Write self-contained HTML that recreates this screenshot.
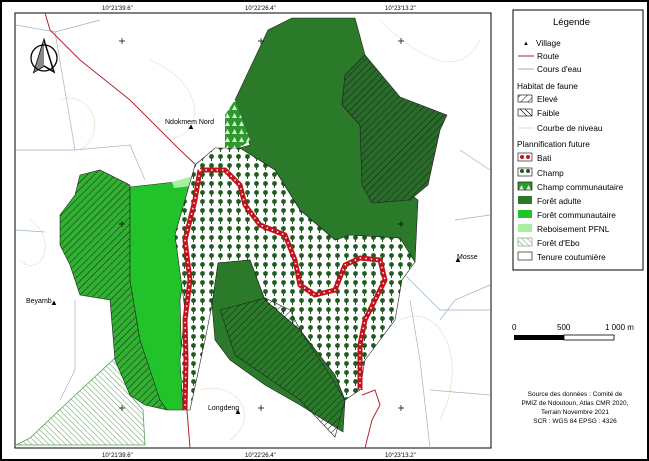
<!DOCTYPE html>
<html><head><meta charset="utf-8"><style>
body{margin:0;width:649px;height:461px;background:#fff;overflow:hidden;font-family:"Liberation Sans",sans-serif}
svg{position:absolute;left:0;top:0}
</style></head><body>
<svg width="649" height="461" viewBox="0 0 649 461">
<defs>
<pattern id="hd" width="5" height="5" patternUnits="userSpaceOnUse" patternTransform="rotate(45)"><line x1="0" y1="0" x2="0" y2="5" stroke="#0a2a0a" stroke-width="1"/></pattern>
<pattern id="he" width="4" height="4" patternUnits="userSpaceOnUse" patternTransform="rotate(-45)"><line x1="0" y1="0" x2="0" y2="4" stroke="#5aa05a" stroke-width="1"/></pattern>
<pattern id="tr" width="9" height="9" patternUnits="userSpaceOnUse"><rect width="9" height="9" fill="#fff"/><circle cx="4.5" cy="3.5" r="2.4" fill="#1f5a1f"/><rect x="4" y="5" width="1" height="3" fill="#1f5a1f"/></pattern>
<pattern id="tc" width="7" height="8" patternUnits="userSpaceOnUse"><rect width="7" height="8" fill="#2e9a2e"/><path d="M3.5 1 L6 6 L1 6Z" fill="#d8f0d8"/></pattern>
</defs>
<rect x="1" y="1" width="647" height="459" fill="#fff" stroke="#000" stroke-width="2"/>
<rect x="15" y="13" width="476" height="435" fill="#fff" stroke="#000" stroke-width="1"/>
<g fill="none" stroke="#e8dcc0" stroke-width="0.6">
<path d="M150 60 C200 80 210 130 170 140"/><path d="M380 20 C420 60 460 80 480 40"/><path d="M400 320 C440 300 470 360 440 420"/><path d="M30 220 C60 240 40 280 20 260"/><path d="M200 390 C240 380 260 420 230 440"/><path d="M60 100 C90 90 110 130 80 150"/>
</g>
<g fill="none" stroke="#9ab4c8" stroke-width="0.7">
<path d="M16 25 L55 32 L100 20"/><path d="M55 32 L70 120 L75 150"/><path d="M16 150 L75 150 L130 145 L145 180"/><path d="M460 150 L490 170"/><path d="M400 270 L440 310 L490 310"/><path d="M410 300 L420 360 L430 448"/><path d="M440 320 L455 300 L490 285"/><path d="M430 390 L490 395"/><path d="M16 230 L45 232"/><path d="M75 300 L75 370 L60 400"/><path d="M490 215 L455 220"/>
</g>
<polygon points="16,445 30,438 70,400 115,358 130,395 143,410 145,445" fill="url(#he)" stroke="#5aa05a" stroke-width="0.8"/>
<polygon points="80,175 100,170 130,185 130,280 140,340 167,410 145,405 130,395 115,360 110,300 80,295 70,265 60,245 60,215 75,195" fill="#32b034"/>
<polygon points="80,175 100,170 130,185 130,280 140,340 167,410 145,405 130,395 115,360 110,300 80,295 70,265 60,245 60,215 75,195" fill="url(#hd)" stroke="#222" stroke-width="0.6"/>
<polygon points="130,187 175,182 193,178 192,230 180,300 183,410 167,410 160,400 140,340 130,280" fill="#22c22a" stroke="#222" stroke-width="0.6"/>
<polygon points="172,182 193,176 192,186 174,188" fill="#a6f0a0"/>
<polygon points="195,165 215,148 240,148 275,170 300,210 335,240 350,235 400,238 415,262 402,280 395,320 380,340 365,360 360,390 345,400 335,375 300,330 265,300 250,260 218,263 212,305 205,340 190,410 183,410 180,360 185,310 175,235" fill="url(#tr)" stroke="#222" stroke-width="0.6"/>
<polygon points="235,100 268,30 292,18 355,18 365,55 345,75 342,105 360,125 372,200 405,190 418,200 415,262 400,238 350,235 335,240 300,210 275,170 240,148 250,145" fill="#2a7a2a" stroke="#222" stroke-width="0.6"/>
<polygon points="345,75 365,55 400,97 447,115 440,130 428,185 410,200 372,203 362,185 360,125 342,105" fill="#2a6a2a"/>
<polygon points="345,75 365,55 400,97 447,115 440,130 428,185 410,200 372,203 362,185 360,125 342,105" fill="url(#hd)" stroke="#222" stroke-width="0.6"/>
<polygon points="225,115 235,100 250,140 240,148 225,148" fill="url(#tc)"/>
<polygon points="218,263 250,260 265,300 300,330 335,375 345,400 343,432 300,405 265,385 230,360 215,340 212,305" fill="#2a7a2a" stroke="#222" stroke-width="0.6"/>
<polygon points="220,310 265,298 290,310 300,330 330,375 345,400 335,437 300,400 235,355" fill="url(#hd)" stroke="#222" stroke-width="0.6"/>
<g fill="none" stroke-linejoin="round">
<path d="M200 170 L225 170 L240 185 L245 205 L260 225 L285 235 L295 260 L300 285 L315 295 L335 290 L345 265 L360 258 L380 260 L385 280 L375 300 L365 320 L360 345 L360 390 M200 170 L195 200 L185 240 L190 280 L185 320 L186 360 L185 410" stroke="#c0141c" stroke-width="5"/>
<path d="M200 170 L225 170 L240 185 L245 205 L260 225 L285 235 L295 260 L300 285 L315 295 L335 290 L345 265 L360 258 L380 260 L385 280 L375 300 L365 320 L360 345 L360 390 M200 170 L195 200 L185 240 L190 280 L185 320 L186 360 L185 410" stroke="#fff" stroke-width="1.5" stroke-dasharray="1.5 4"/>
</g>
<g fill="none" stroke="#b8232c" stroke-width="1">
<path d="M45 13 L50 30 L80 60 L130 100 L180 150 L196 165"/><path d="M187 410 L190 448"/><path d="M362 395 L375 390 L380 405 L372 420 L365 448"/>
</g>
<g font-size="7" fill="#000">
<text x="165" y="124">Ndokmem Nord</text><text x="26" y="303">Beyamb</text><text x="457" y="259">Mosse</text><text x="208" y="410">Longdeng</text>
<text x="102" y="10" font-size="6">10°21'39.6"</text><text x="245" y="10" font-size="6">10°22'26.4"</text><text x="385" y="10" font-size="6">10°23'13.2"</text>
<text x="102" y="457" font-size="6">10°21'39.6"</text><text x="245" y="457" font-size="6">10°22'26.4"</text><text x="385" y="457" font-size="6">10°23'13.2"</text>
</g>
<g fill="#000" font-size="8"><text x="187" y="129">▲</text><text x="50" y="305">▲</text><text x="454" y="262">▲</text><text x="234" y="414">▲</text></g>
<g stroke="#000" stroke-width="0.7"><path d="M119 41h6M122 38v6M258 41h6M261 38v6M398 41h6M401 38v6M119 224h6M122 221v6M398 224h6M401 221v6M119 408h6M122 405v6M258 408h6M261 405v6M398 408h6M401 405v6"/></g>
<g transform="translate(34,40)"><path d="M0 32 L10 0 L20 32 L10 26Z" fill="#fff" stroke="#000" stroke-width="1.5"/><path d="M0 32 L10 0 L10 26Z" fill="#888"/><circle cx="10" cy="18" r="13" fill="none" stroke="#000" stroke-width="1.3"/></g>
<rect x="513" y="10" width="130" height="260" fill="#fff" stroke="#000" stroke-width="1"/>
<g font-size="8.3" fill="#000">
<text x="553" y="25" font-size="9.5">Légende</text>
<text x="523" y="45" font-size="6">▲</text><text x="536" y="46">Village</text>
<line x1="518" y1="56" x2="534" y2="56" stroke="#b8232c"/><text x="537" y="59">Route</text>
<line x1="518" y1="69" x2="534" y2="69" stroke="#9ab4c8"/><text x="537" y="72">Cours d'eau</text>
<text x="517" y="89">Habitat de faune</text>
<rect x="518" y="95" width="14" height="7" fill="url(#hd)" stroke="#000" stroke-width=".6"/><text x="537" y="102">Elevé</text>
<rect x="518" y="109" width="14" height="7" fill="#fff" stroke="#000" stroke-width=".6"/><path d="M520 109l7 7M525 109l7 7" stroke="#000" stroke-width=".6"/><text x="537" y="116">Faible</text>
<line x1="518" y1="128" x2="534" y2="128" stroke="#e8dcc0"/><text x="537" y="131">Courbe de niveau</text>
<text x="517" y="147">Plannification future</text>
<rect x="518" y="153" width="14" height="8" fill="#fff" stroke="#000" stroke-width=".6"/><circle cx="522" cy="157" r="2" fill="#c0141c"/><circle cx="528" cy="157" r="2" fill="#c0141c"/><text x="537" y="161">Bati</text>
<rect x="518" y="168" width="14" height="8" fill="#fff" stroke="#000" stroke-width=".6"/><circle cx="522" cy="171" r="2" fill="#1f5a1f"/><circle cx="528" cy="171" r="2" fill="#1f5a1f"/><text x="537" y="176">Champ</text>
<rect x="518" y="182" width="14" height="8" fill="url(#tc)" stroke="#000" stroke-width=".6"/><text x="537" y="190">Champ communautaire</text>
<rect x="518" y="196" width="14" height="8" fill="#2a7a2a"/><text x="537" y="204">Forêt adulte</text>
<rect x="518" y="210" width="14" height="8" fill="#22c22a"/><text x="537" y="218">Forêt communautaire</text>
<rect x="518" y="224" width="14" height="8" fill="#a6f0a0"/><text x="537" y="232">Reboisement PFNL</text>
<rect x="518" y="238" width="14" height="8" fill="url(#he)" stroke="#5aa05a" stroke-width=".6"/><text x="537" y="246">Forêt d'Ebo</text>
<rect x="518" y="252" width="14" height="8" fill="#fff" stroke="#000" stroke-width=".6"/><text x="537" y="260">Tenure coutumière</text>
</g>
<g font-size="8" fill="#000">
<text x="512" y="330">0</text><text x="557" y="330">500</text><text x="605" y="330">1 000 m</text>
<rect x="514" y="335" width="50" height="5" fill="#000"/><rect x="564" y="335" width="50" height="5" fill="#fff" stroke="#000" stroke-width=".8"/>
<g font-size="6.5" text-anchor="middle"><text x="575" y="396">Source des données : Comité de</text><text x="575" y="405">PMIZ de Ndoutoun, Atlas CMR 2020,</text><text x="575" y="414">Terrain Novembre 2021</text><text x="575" y="423">SCR : WGS 84   EPSG : 4326</text></g>
</g>
</svg>
</body></html>
